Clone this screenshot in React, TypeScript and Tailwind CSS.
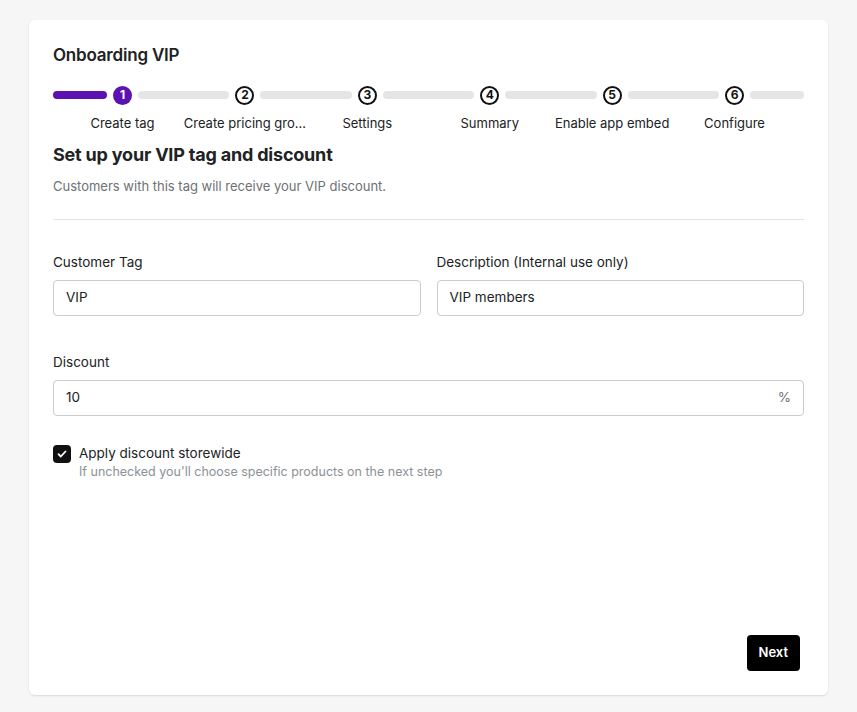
import React from "react";

const steps = ["Create tag", "Create pricing gro…", "Settings", "Summary", "Enable app embed", "Configure"];

export default function App() {
  return (
    <div className="min-h-[712px] bg-[#f6f6f7] px-[29px] pt-5 pb-4 text-[#202223]" style={{ fontFamily: "Inter, 'Noto Sans', sans-serif" }}>
      <div className="bg-white rounded-md shadow-[0_1px_2px_rgba(0,0,0,0.12)] h-[675px] px-6 pt-[25px] pb-6 flex flex-col">
        <h1 className="text-[17px] font-semibold leading-5 tracking-[-0.2px]">Onboarding VIP</h1>
        <div className="mt-[21px] flex items-center h-[18px]">
          <div className="w-[54px] h-[8px] rounded-full bg-[#5b12b0]" />
          {steps.map((s, i) => (
            <React.Fragment key={s}>
              <div className="relative mx-1.5 shrink-0">
                <div className={`w-[19px] h-[19px] rounded-full flex items-center justify-center text-[12px] font-bold ${i === 0 ? "bg-[#5b12b0] text-white" : "border-2 border-[#111] text-[#111]"}`}>{i + 1}</div>
                <div className="absolute left-1/2 -translate-x-1/2 top-[29px] whitespace-nowrap text-[13px] leading-4">{s}</div>
              </div>
              {i < 5 ? <div className="flex-1 h-[8px] rounded-full bg-[#e4e5e7]" /> : <div className="w-[54px] h-[8px] rounded-full bg-[#e4e5e7]" />}
            </React.Fragment>
          ))}
        </div>
        <h2 className="mt-[39px] text-[18px] font-bold leading-6 tracking-[-0.2px]">Set up your VIP tag and discount</h2>
        <p className="mt-[10px] text-[13px] text-[#6d7175]">Customers with this tag will receive your VIP discount.</p>
        <div className="mt-[22px] h-px bg-[#e1e3e5]" />
        <div className="mt-[34px] grid grid-cols-2 gap-4">
          <div>
            <div className="text-[13.5px] leading-4">Customer Tag</div>
            <div className="mt-[10px] h-9 border border-[#c9cccf] rounded-[4px] flex items-center px-3 text-[13.5px]">VIP</div>
          </div>
          <div>
            <div className="text-[13.5px] leading-4">Description (Internal use only)</div>
            <div className="mt-[10px] h-9 border border-[#c9cccf] rounded-[4px] flex items-center px-3 text-[13.5px]">VIP members</div>
          </div>
        </div>
        <div className="mt-[38px] text-[13.5px] leading-4">Discount</div>
        <div className="mt-[10px] h-9 border border-[#c9cccf] rounded-[4px] flex items-center justify-between px-3 text-[13.5px]">
          <span>10</span><span className="text-[#6d7175]">%</span>
        </div>
        <div className="mt-[29px] flex gap-2">
          <div className="w-[18px] h-[18px] rounded-[4px] bg-[#111] flex items-center justify-center shrink-0">
            <svg width="12" height="12" viewBox="0 0 12 12"><path d="M2.5 6.2l2.3 2.3 4.7-5" stroke="white" strokeWidth="1.8" fill="none" strokeLinecap="round" strokeLinejoin="round" /></svg>
          </div>
          <div>
            <div className="text-[13.5px] leading-4">Apply discount storewide</div>
            <div className="mt-[3px] text-[12.5px] leading-4 text-[#8c9196]">If unchecked you'll choose specific products on the next step</div>
          </div>
        </div>
        <div className="flex-1" />
        <div className="flex justify-end pr-1">
          <button className="h-9 px-3 bg-black text-white rounded-[4px] text-[13px] font-semibold">Next</button>
        </div>
      </div>
    </div>
  );
}
